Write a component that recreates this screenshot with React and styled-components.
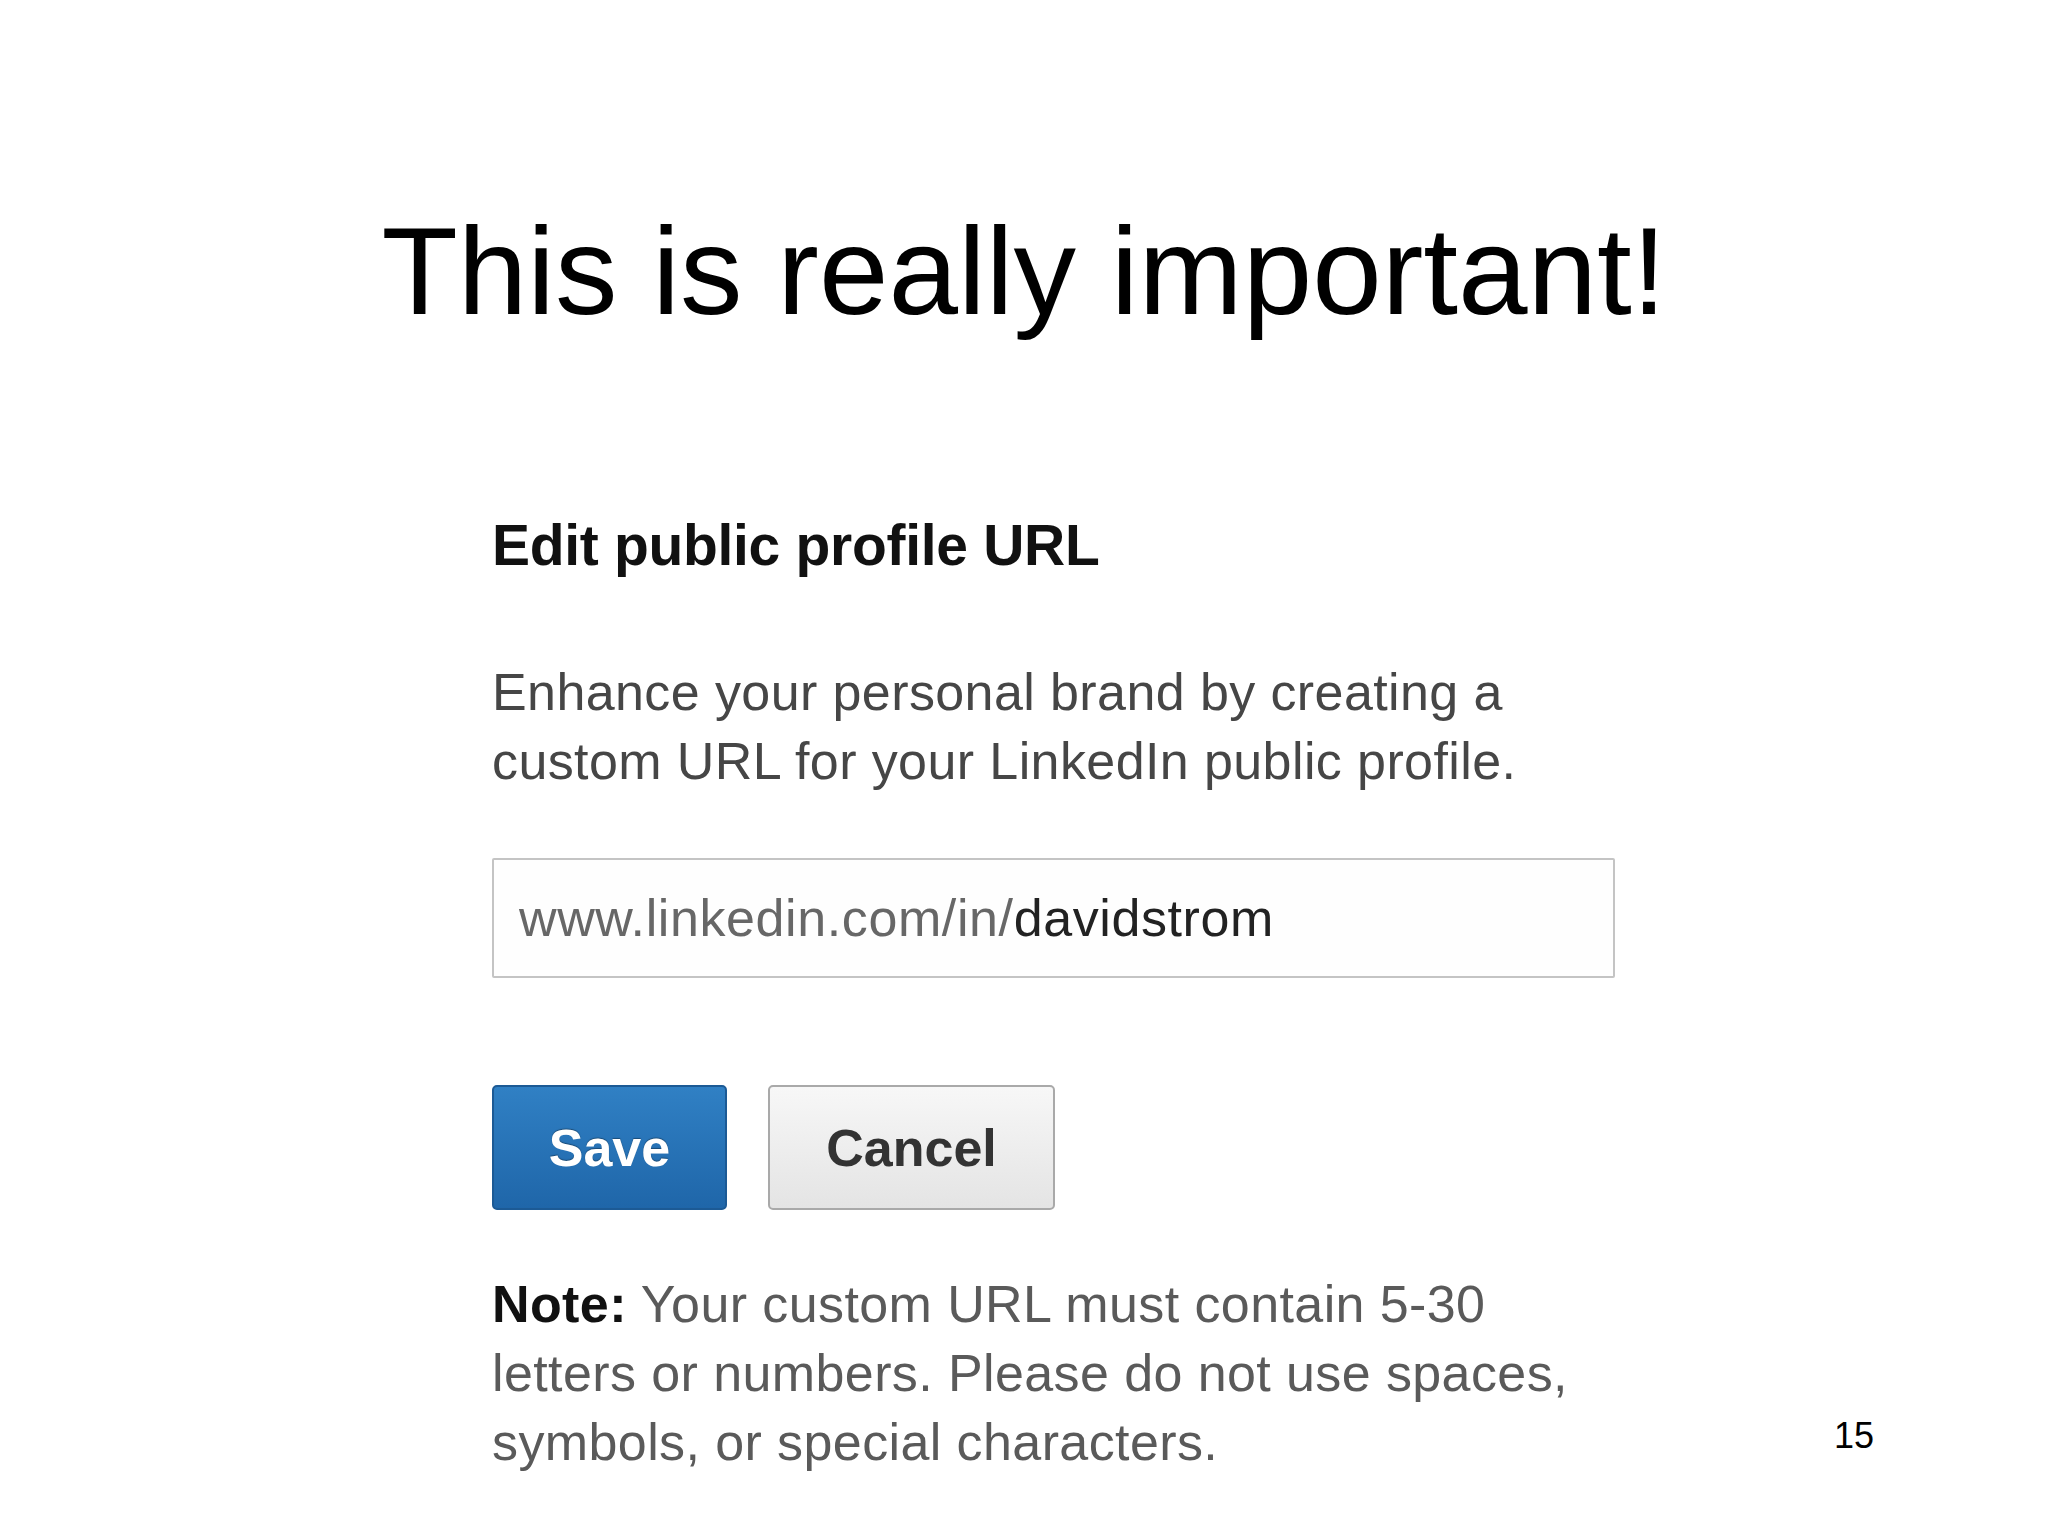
import React from "react";
import styled, { createGlobalStyle } from "styled-components";

const GlobalStyle = createGlobalStyle`
  html, body {
    margin: 0;
    padding: 0;
    background: #ffffff;
  }
  body {
    font-family: "Liberation Sans", Arial, sans-serif;
  }
`;

const Slide = styled.div`
  width: 2048px;
  height: 1536px;
  background: #ffffff;
  display: flex;
  flex-direction: column;
  box-sizing: border-box;
  padding-top: 208px;
  overflow: hidden;
`;

const Title = styled.h1`
  margin: 0;
  font-family: "Liberation Sans", Arial, sans-serif;
  font-size: 125px;
  line-height: 125px;
  font-weight: normal;
  color: #000000;
  text-align: center;
`;

const Body = styled.div`
  display: flex;
  align-items: flex-end;
  justify-content: space-between;
  margin-top: 184px;
  margin-left: 492px;
  width: 1382px;
`;

const Dialog = styled.div`
  display: flex;
  flex-direction: column;
  width: 1123px;
`;

const Heading = styled.h2`
  margin: 0;
  font-family: "Liberation Sans", Arial, sans-serif;
  font-size: 57px;
  line-height: 57px;
  font-weight: bold;
  color: #111111;
  letter-spacing: -0.3px;
`;

const Text = styled.p`
  margin: ${({ $top }) => $top}px 0 0;
  font-family: "Liberation Sans", Arial, sans-serif;
  font-size: 52px;
  line-height: 69px;
  letter-spacing: 0.4px;
  color: ${({ $color }) => $color || "#464646"};
  width: ${({ $width }) => $width}px;
`;

const Strong = styled.strong`
  color: #111111;
  font-weight: bold;
`;

const UrlField = styled.div`
  margin-top: 62px;
  height: 120px;
  box-sizing: border-box;
  border: 2px solid #c4c4c4;
  border-radius: 2px;
  background: #fefefe;
  display: flex;
  align-items: center;
  padding-left: 25px;
  font-family: "Liberation Sans", Arial, sans-serif;
  font-size: 52px;
  line-height: 52px;
  letter-spacing: 0.6px;
  color: #676767;
`;

const UrlValue = styled.span`
  color: #222222;
`;

const Actions = styled.div`
  display: flex;
  gap: 41px;
  margin-top: 107px;
`;

const Button = styled.button`
  height: 125px;
  width: ${({ $width }) => $width}px;
  box-sizing: border-box;
  border-radius: 5px;
  font-family: "Liberation Sans", Arial, sans-serif;
  font-size: 52px;
  font-weight: bold;
  padding: 0;
  cursor: pointer;
  ${({ $primary }) =>
    $primary
      ? `
    background: linear-gradient(#3080c4, #1f66a9);
    border: 2px solid #1c5a95;
    color: #ffffff;
    text-shadow: 0 -1px 1px rgba(0, 0, 0, 0.35);
  `
      : `
    background: linear-gradient(#f7f7f7, #e4e4e4);
    border: 2px solid #a9a9a9;
    color: #333333;
  `}
`;

const PageNumber = styled.div`
  font-family: "Liberation Sans", Arial, sans-serif;
  font-size: 36px;
  line-height: 36px;
  color: #000000;
  margin-bottom: 23px;
`;

export default function App() {
  return (
    <>
      <GlobalStyle />
      <Slide>
        <Title>This is really important!</Title>
        <Body>
          <Dialog>
            <Heading>Edit public profile URL</Heading>
            <Text $top={84} $width={1080}>
              Enhance your personal brand by creating a custom URL for your
              LinkedIn public profile.
            </Text>
            <UrlField>
              www.linkedin.com/in/<UrlValue>davidstrom</UrlValue>
            </UrlField>
            <Actions>
              <Button $primary $width={235}>
                Save
              </Button>
              <Button $width={287}>Cancel</Button>
            </Actions>
            <Text $top={60} $width={1080} $color="#5a5a5a">
              <Strong>Note:</Strong> Your custom URL must contain 5-30 letters
              or numbers. Please do not use spaces, symbols, or special
              characters.
            </Text>
          </Dialog>
          <PageNumber>15</PageNumber>
        </Body>
      </Slide>
    </>
  );
}
